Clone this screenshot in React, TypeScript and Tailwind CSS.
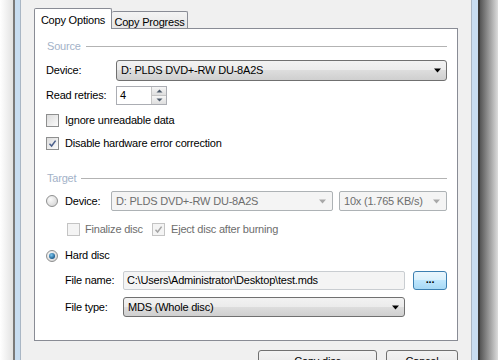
import React from "react";

const btnGrad =
  "bg-[linear-gradient(#f2f2f2_0%,#ebebeb_50%,#dddddd_50%,#cfcfcf_100%)]";

const Arrow = ({ disabled }: { disabled?: boolean }) => (
  <svg width="9" height="5" viewBox="0 0 9 5" className="shrink-0">
    <polygon points="1,0.5 8,0.5 4.5,4.5" fill={disabled ? "#a8a8a8" : "#000"} />
  </svg>
);

const Check = ({ checked, disabled }: { checked?: boolean; disabled?: boolean }) => (
  <div
    className={`flex h-[13px] w-[13px] shrink-0 items-center justify-center border ${
      disabled
        ? "border-[#c4c4c4] bg-[#f4f4f4]"
        : "border-[#8e8f8f] bg-[linear-gradient(135deg,#dcdcdc,#fbfbfb)]"
    }`}
  >
    {checked && (
      <svg width="9" height="9" viewBox="0 0 9 9">
        <path
          d="M1.5 4.8 L3.6 7 L7.6 1.6"
          fill="none"
          stroke={disabled ? "#a5a5a5" : "#4a5f8a"}
          strokeWidth="1.5"
        />
      </svg>
    )}
  </div>
);

const Radio = ({ checked }: { checked?: boolean }) => (
  <div className="flex h-[12px] w-[12px] shrink-0 items-center justify-center rounded-full border border-[#8e8f8f] bg-[radial-gradient(circle_at_35%_35%,#fafafa,#cfcfcf)]">
    {checked && (
      <div className="h-[6px] w-[6px] rounded-full bg-[radial-gradient(circle_at_40%_35%,#7ec8f0,#1b5c8f_70%,#12446b)]" />
    )}
  </div>
);

const Header = ({ label }: { label: string }) => (
  <div className="flex h-[14px] items-center pl-[12px] pr-[10px]">
    <span className="text-[#a3b2c8]">{label}</span>
    <div className="ml-[5px] h-px flex-1 bg-[#b3b3b3]" />
  </div>
);

export default function App() {
  return (
    <div className="flex h-[360px] w-[498px] overflow-hidden font-['Liberation_Sans',Arial,sans-serif] text-[11px] tracking-[-0.2px] text-black">
      <div className="w-[13px] shrink-0 bg-[linear-gradient(90deg,#ffffff,#e2e2e2)]" />
      <div className="w-[2px] shrink-0 bg-[#7a7a7a]" />
      <div className="w-[5px] shrink-0 bg-[#c8ddf1]" />
      <div className="w-px shrink-0 bg-[#a9b6c4]" />

      <div className="flex flex-1 flex-col bg-[#f0f0f0] pl-[13px] pr-[13px] pt-[8px]">
        {/* tabs */}
        <div className="flex h-[20px] shrink-0 items-end">
          <div className="relative z-10 -mb-px flex h-[21px] w-[78px] items-start justify-center rounded-t-[2px] border border-b-0 border-[#898c95] bg-white pt-[3px]">
            Copy Options
          </div>
          <div className="flex h-[17px] w-[76px] items-start justify-center rounded-t-[2px] border border-b-0 border-l-0 border-[#898c95] bg-[linear-gradient(#f4f4f4,#e6e6e6)] pt-[2px]">
            Copy Progress
          </div>
        </div>

        {/* panel */}
        <div className="flex h-[313px] shrink-0 flex-col border border-[#898c95] bg-white">
          <div className="mt-[10px]">
            <Header label="Source" />
          </div>

          <div className="mt-[7px] flex h-[21px] items-center pl-[11px] pr-[10px]">
            <span className="w-[70px]">Device:</span>
            <div
              className={`flex h-full flex-1 items-center justify-between rounded-[3px] border border-[#707070] pl-[4px] pr-[4px] ${btnGrad}`}
            >
              <span>D: PLDS DVD+-RW DU-8A2S</span>
              <Arrow />
            </div>
          </div>

          <div className="mt-[5px] flex h-[19px] items-center pl-[11px]">
            <span className="w-[70px]">Read retries:</span>
            <div className="flex h-full w-[51px] items-center border border-[#abadb3] bg-white">
              <span className="flex-1 pl-[3px]">4</span>
              <div className="flex h-full w-[15px] flex-col border-l border-[#c5c5c5]">
                <div className="flex flex-1 items-center justify-center border-b border-[#c5c5c5] bg-[linear-gradient(#f6f6f6,#dedede)]">
                  <svg width="7" height="4" viewBox="0 0 7 4">
                    <polygon points="0.5,3.5 6.5,3.5 3.5,0.5" fill="#4d5a6a" />
                  </svg>
                </div>
                <div className="flex flex-1 items-center justify-center bg-[linear-gradient(#f6f6f6,#dedede)]">
                  <svg width="7" height="4" viewBox="0 0 7 4">
                    <polygon points="0.5,0.5 6.5,0.5 3.5,3.5" fill="#4d5a6a" />
                  </svg>
                </div>
              </div>
            </div>
          </div>

          <div className="mt-[9px] flex h-[13px] items-center gap-[6px] pl-[11px]">
            <Check />
            <span>Ignore unreadable data</span>
          </div>

          <div className="mt-[10px] flex h-[13px] items-center gap-[6px] pl-[11px]">
            <Check checked />
            <span>Disable hardware error correction</span>
          </div>

          <div className="mt-[21px]">
            <Header label="Target" />
          </div>

          <div className="mt-[6px] flex h-[20px] items-center pl-[11px] pr-[10px]">
            <Radio />
            <span className="ml-[7px] w-[46px]">Device:</span>
            <div className="flex h-full w-[222px] items-center justify-between rounded-[2px] border border-[#adb2b5] bg-[#f4f4f4] pl-[4px] pr-[5px] text-[#6d6d6d]">
              <span>D: PLDS DVD+-RW DU-8A2S</span>
              <Arrow disabled />
            </div>
            <div className="ml-[6px] flex h-full flex-1 items-center justify-between rounded-[2px] border border-[#adb2b5] bg-[#f4f4f4] pl-[4px] pr-[5px] text-[#6d6d6d]">
              <span>10x (1.765 KB/s)</span>
              <Arrow disabled />
            </div>
          </div>

          <div className="mt-[12px] flex h-[13px] items-center pl-[32px] text-[#6d6d6d]">
            <Check disabled />
            <span className="ml-[5px] w-[67px]">Finalize disc</span>
            <Check checked disabled />
            <span className="ml-[6px]">Eject disc after burning</span>
          </div>

          <div className="mt-[13px] flex h-[13px] items-center pl-[11px]">
            <Radio checked />
            <span className="ml-[7px]">Hard disc</span>
          </div>

          <div className="mt-[9px] flex h-[19px] items-center pl-[30px] pr-[10px]">
            <span className="w-[58px]">File name:</span>
            <div className="flex h-full w-[282px] items-center rounded-[2px] border border-[#c9cdd1] bg-[#f4f4f4] pl-[3px]">
              C:\Users\Administrator\Desktop\test.mds
            </div>
            <div className="ml-[8px] flex h-full flex-1 items-center justify-center rounded-[3px] border border-[#3c7fb1] bg-[linear-gradient(#eaf6fd_0%,#d9f0fc_50%,#bee6fd_50%,#a7d9f5_100%)] pb-[3px] font-bold">
              ...
            </div>
          </div>

          <div className="mt-[7px] flex h-[20px] items-center pl-[30px]">
            <span className="w-[58px]">File type:</span>
            <div
              className={`flex h-full w-[282px] items-center justify-between rounded-[3px] border border-[#707070] pl-[4px] pr-[4px] ${btnGrad}`}
            >
              <span>MDS (Whole disc)</span>
              <Arrow />
            </div>
          </div>
        </div>

        {/* buttons */}
        <div className="mt-[9px] flex shrink-0 justify-end gap-[9px]">
          <div
            className={`flex h-[23px] w-[119px] items-center justify-center rounded-[3px] border border-[#707070] ${btnGrad}`}
          >
            Copy disc
          </div>
          <div
            className={`flex h-[23px] w-[72px] items-center justify-center rounded-[3px] border border-[#707070] ${btnGrad}`}
          >
            Cancel
          </div>
        </div>
      </div>

      <div className="w-px shrink-0 bg-[#a9b6c4]" />
      <div className="w-[6px] shrink-0 bg-[#c8ddf1]" />
      <div className="w-[2px] shrink-0 bg-[#3c3c3c]" />
      <div className="w-[18px] shrink-0 bg-[linear-gradient(90deg,#555555,#dcdcdc)]" />
    </div>
  );
}
